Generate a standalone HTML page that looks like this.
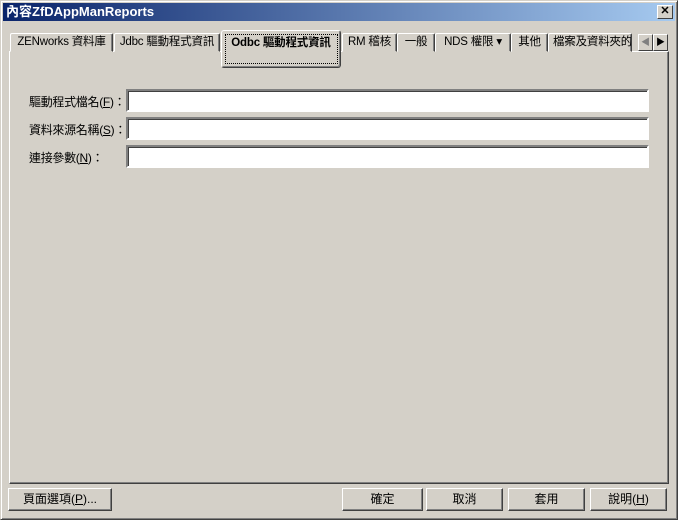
<!DOCTYPE html>
<html><head><meta charset="utf-8"><style>
*{box-sizing:border-box;margin:0;padding:0}
body{width:678px;height:520px;background:#d4d0c8;font:12px "Liberation Sans","Noto Sans CJK TC",sans-serif;position:relative;overflow:hidden;color:#000}
.win{position:absolute;left:0;top:0;width:678px;height:520px;border:1px solid;border-color:#d4d0c8 #404040 #404040 #d4d0c8;box-shadow:inset 1px 1px #fff,inset -1px -1px #808080}
.title{position:absolute;left:3px;top:3px;width:672px;height:18px;background:linear-gradient(90deg,#0a246a,#a6caf0);color:#fff;font-weight:bold;font-size:13px;line-height:18px;padding-left:3px}
.x{position:absolute;right:2px;top:2px;width:16px;height:14px;background:#d4d0c8;border:1px solid;border-color:#fff #404040 #404040 #fff;color:#000;font-size:11px;line-height:11px;text-align:center}
.tab{position:absolute;top:33px;height:19px;border:1px solid;border-color:#fff #404040 transparent #fff;border-radius:2px 2px 0 0;box-shadow:inset -1px 0 #808080;text-align:center;line-height:17px;font-size:11.5px;white-space:nowrap;overflow:hidden;background:#d4d0c8;letter-spacing:-0.2px}
.panel{position:absolute;left:9px;top:51px;width:660px;height:433px;border:1px solid;border-color:#fff #404040 #404040 #fff;box-shadow:inset -1px -1px #808080}
.sel{top:30px;height:38px;z-index:2;font-weight:bold;line-height:17px;padding-top:4px;border-color:#fff #404040 #404040 #fff;box-shadow:inset -1px -1px #808080;border-radius:3px}
.sel span{position:absolute;left:3px;top:3px;right:2px;bottom:3px;border:1px dotted #000}
.in{position:absolute;left:126px;width:523px;height:23px;background:#fff;border:2px solid;border-color:#808080 #fff #fff #808080;box-shadow:inset 1px 1px #404040}
.lb{position:absolute;left:29px;font-size:12px;letter-spacing:-0.3px}
.btn{position:absolute;top:488px;height:23px;border:1px solid;border-color:#fff #404040 #404040 #fff;box-shadow:inset -1px -1px #808080;text-align:center;line-height:21px;font-size:12px}
.arr{position:absolute;top:34px;width:15px;height:17px;border:1px solid;border-color:#fff #404040 #404040 #fff;font-size:9px;text-align:center;line-height:15px}
</style></head><body>
<div class="win"></div>
<div class="title">內容ZfDAppManReports<div class="x">✕</div></div>
<div class="panel"></div>
<div class="tab" style="left:10px;width:103px">ZENworks 資料庫</div>
<div class="tab" style="left:114px;width:106px">Jdbc 驅動程式資訊</div>
<div class="tab sel" style="left:221px;width:120px">Odbc 驅動程式資訊<span></span></div>
<div class="tab" style="left:342px;width:55px">RM 稽核</div>
<div class="tab" style="left:397px;width:38px">一般</div>
<div class="tab" style="left:435px;width:76px">NDS 權限 ▾</div>
<div class="tab" style="left:511px;width:37px">其他</div>
<div class="tab" style="left:548px;width:84px;text-align:left;padding-left:4px">檔案及資料夾的</div>
<div class="arr" style="left:638px;color:#808080">◀</div>
<div class="arr" style="left:653px">▶</div>
<div class="lb" style="top:93px">驅動程式檔名(<u>F</u>)：</div>
<div class="lb" style="top:121px">資料來源名稱(<u>S</u>)：</div>
<div class="lb" style="top:149px">連接參數(<u>N</u>)：</div>
<div class="in" style="top:89px"></div>
<div class="in" style="top:117px"></div>
<div class="in" style="top:145px"></div>
<div class="btn" style="left:8px;width:104px">頁面選項(<u>P</u>)...</div>
<div class="btn" style="left:342px;width:81px">確定</div>
<div class="btn" style="left:426px;width:77px">取消</div>
<div class="btn" style="left:508px;width:77px">套用</div>
<div class="btn" style="left:590px;width:77px">說明(<u>H</u>)</div>
</body></html>
